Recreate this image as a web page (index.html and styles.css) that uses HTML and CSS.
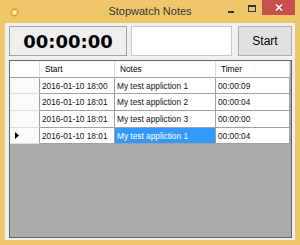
FILE: index.html
```html
<!DOCTYPE html>
<html lang="en">
<head>
  <meta charset="UTF-8" />
  <title>Stopwatch Notes</title>
  <link rel="stylesheet" href="styles.css">
</head>
<body>
  <div class="window">
    <div class="titlebar">
      <svg class="app-icon" width="9" height="9" viewBox="0 0 9 9">
        <circle cx="4.5" cy="4.5" r="4.3" fill="#f4a41c"/>
        <rect x="2.5" y="2.5" width="4" height="4" fill="#fdf3dc"/>
      </svg>
      <div class="title">Stopwatch Notes</div>
      <div class="win-controls">
        <div class="ctl ctl-min">
          <svg width="6" height="2" viewBox="0 0 6 2"><rect width="6" height="2" fill="#333"/></svg>
        </div>
        <div class="ctl ctl-max">
          <svg width="8" height="7" viewBox="0 0 8 7">
            <rect x="0.5" y="1" width="7" height="5.5" fill="none" stroke="#333" stroke-width="1"/>
            <rect x="0" y="0" width="8" height="2" fill="#333"/>
          </svg>
        </div>
        <div class="ctl ctl-close">
          <svg width="8" height="7" viewBox="0 0 8 7">
            <path d="M1 0.5 L7 6.5 M7 0.5 L1 6.5" stroke="#fff" stroke-width="1.5"/>
          </svg>
        </div>
      </div>
    </div>

    <div class="client">
      <div class="toolbar">
        <div class="clock">00:00:00</div>
        <input class="note-input" type="text">
        <button class="start-btn">Start</button>
      </div>

      <div class="grid">
        <div class="cells">
          <div class="hd corner"></div>
          <div class="hd">Start</div>
          <div class="hd">Notes</div>
          <div class="hd">Timer</div>

          <div class="rh"></div>
          <div class="cell">2016-01-10 18:00</div>
          <div class="cell">My test appliction 1</div>
          <div class="cell">00:00:09</div>

          <div class="rh"></div>
          <div class="cell">2016-01-10 18:01</div>
          <div class="cell">My test appliction 2</div>
          <div class="cell">00:00:04</div>

          <div class="rh"></div>
          <div class="cell">2016-01-10 18:01</div>
          <div class="cell">My test appliction 3</div>
          <div class="cell">00:00:00</div>

          <div class="rh current">
            <svg width="4" height="7" viewBox="0 0 4 7"><path d="M0 0 L4 3.5 L0 7 Z" fill="#000"/></svg>
          </div>
          <div class="cell">2016-01-10 18:01</div>
          <div class="cell selected">My test appliction 1</div>
          <div class="cell">00:00:04</div>
        </div>
      </div>
    </div>
  </div>
</body>
</html>
```

FILE: styles.css
```css
body {
  margin: 0;
  font-family: "Liberation Sans", Arial, sans-serif;
}

.window {
  width: 300px;
  height: 245px;
  box-sizing: border-box;
  padding: 0 5px 5px;
  background-color: #efc76b;
  display: flex;
  flex-direction: column;
}

.titlebar {
  height: 23px;
  flex-shrink: 0;
  display: grid;
  grid-template-columns: 1fr auto 1fr;
  align-items: start;
}

.app-icon {
  margin: 8px 0 0 5px;
}

.title {
  padding-top: 5px;
  font-size: 11px;
  line-height: 13px;
  color: #333;
}

.win-controls {
  justify-self: end;
  display: flex;
}

.ctl {
  height: 15px;
  display: flex;
  align-items: center;
  justify-content: center;
}

.ctl-min {
  width: 22px;
  align-items: flex-end;
  height: 13px;
}

.ctl-max {
  width: 20px;
  align-items: flex-start;
  padding-top: 5px;
  box-sizing: border-box;
}

.ctl-close {
  width: 33px;
  background-color: #c7504f;
}

.client {
  flex: 1;
  background-color: #f0f0f0;
  padding: 3px 3px 2px 4px;
  display: flex;
  flex-direction: column;
  gap: 4px;
}

.toolbar {
  display: flex;
  height: 30px;
}

.clock {
  width: 118px;
  box-sizing: border-box;
  border: 1px solid #a5a5a5;
  background-color: #efefef;
  font-family: "DejaVu Sans", sans-serif;
  font-weight: bold;
  font-size: 18px;
  display: flex;
  align-items: center;
  justify-content: center;
  color: #000;
}

.note-input {
  width: 101px;
  margin: 0 6px 0 4px;
  box-sizing: border-box;
  border: 1px solid #c9c9c9;
  background: #fff;
  padding: 0;
}

.start-btn {
  width: 54px;
  box-sizing: border-box;
  border: 1px solid #adadad;
  background-color: #e1e1e1;
  font-family: "Liberation Sans", Arial, sans-serif;
  font-size: 12px;
  color: #000;
  padding: 0;
}

.grid {
  flex: 1;
  border: 1px solid #646464;
  background-color: #ababab;
  overflow: hidden;
}

.cells {
  display: grid;
  grid-template-columns: 30px 75px 101px 74px;
  grid-template-rows: 17px 16px 17px 17px 16px;
  font-size: 8.3px;
  color: #111;
}

.cells > div {
  box-sizing: border-box;
  display: flex;
  align-items: center;
  white-space: nowrap;
  overflow: hidden;
}

.hd {
  background-color: #fff;
  border-right: 1px solid #dcdcdc;
  border-bottom: 1px solid #a0a0a0;
  padding-left: 5px;
  color: #000;
}

.hd.corner {
  padding-left: 0;
}

.rh {
  background-color: #fbfbfb;
  border-right: 1px solid #a0a0a0;
  border-bottom: 1px solid #dedede;
  padding-left: 5px;
}

.cell {
  background-color: #fff;
  border-right: 1px solid #a0a0a0;
  border-bottom: 1px solid #a0a0a0;
  padding-left: 2px;
}

.cell.selected {
  background-color: #3399ff;
  color: #fff;
}
```
